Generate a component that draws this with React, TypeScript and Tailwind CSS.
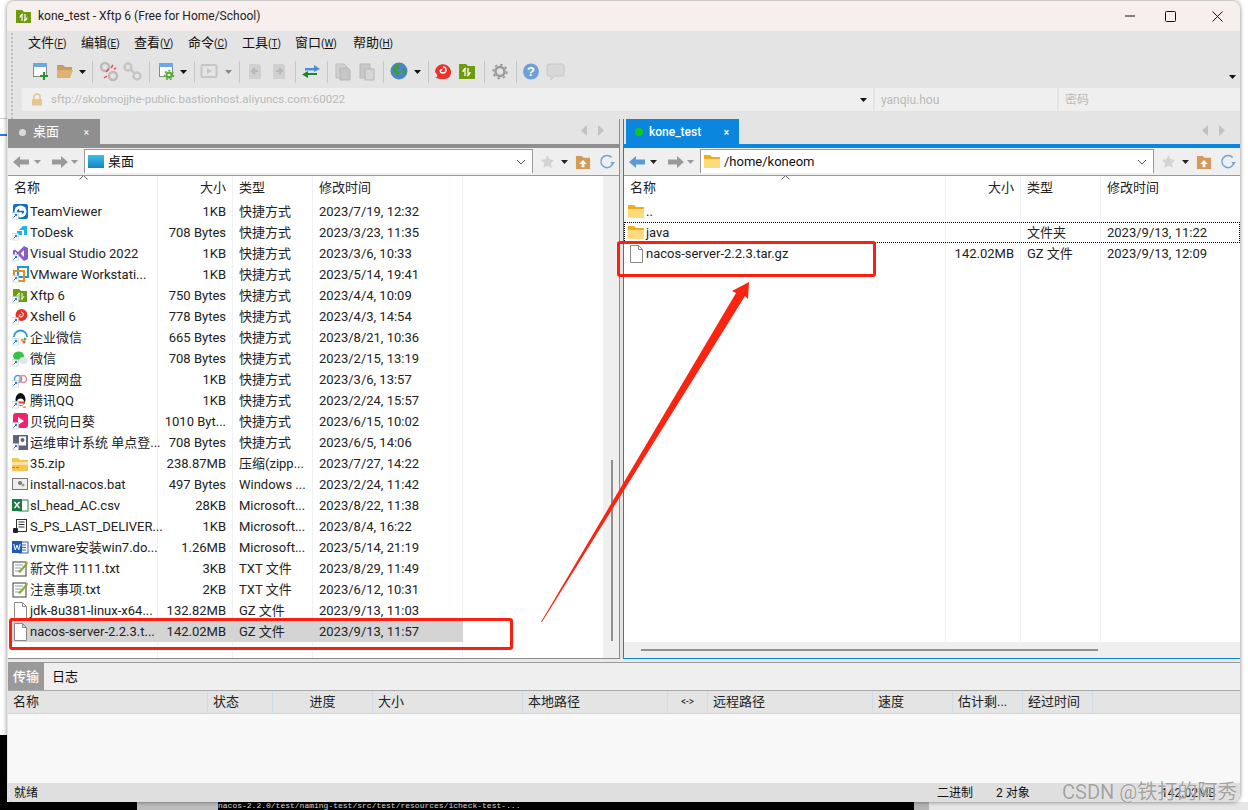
import React from 'react';

type Row = { name: string; size: string; type: string; time: string; icon: string };

const S = '快捷方式';
const leftRows: Row[] = [
    { name: 'TeamViewer', size: '1KB', type: S, time: '2023/7/19, 12:32', icon: 'teamviewer' },
    { name: 'ToDesk', size: '708 Bytes', type: S, time: '2023/3/23, 11:35', icon: 'todesk' },
    { name: 'Visual Studio 2022', size: '1KB', type: S, time: '2023/3/6, 10:33', icon: 'vs' },
    { name: 'VMware Workstati...', size: '1KB', type: S, time: '2023/5/14, 19:41', icon: 'vmware' },
    { name: 'Xftp 6', size: '750 Bytes', type: S, time: '2023/4/4, 10:09', icon: 'xftp' },
    { name: 'Xshell 6', size: '778 Bytes', type: S, time: '2023/4/3, 14:54', icon: 'xshell' },
    { name: '企业微信', size: '665 Bytes', type: S, time: '2023/8/21, 10:36', icon: 'wecom' },
    { name: '微信', size: '708 Bytes', type: S, time: '2023/2/15, 13:19', icon: 'wechat' },
    { name: '百度网盘', size: '1KB', type: S, time: '2023/3/6, 13:57', icon: 'baidu' },
    { name: '腾讯QQ', size: '1KB', type: S, time: '2023/2/24, 15:57', icon: 'qq' },
    { name: '贝锐向日葵', size: '1010 Byt...', type: S, time: '2023/6/15, 10:02', icon: 'sunflower' },
    { name: '运维审计系统 单点登...', size: '708 Bytes', type: S, time: '2023/6/5, 14:06', icon: 'audit' },
    { name: '35.zip', size: '238.87MB', type: '压缩(zipp...', time: '2023/7/27, 14:22', icon: 'zip' },
    { name: 'install-nacos.bat', size: '497 Bytes', type: 'Windows ...', time: '2023/2/24, 11:42', icon: 'bat' },
    { name: 'sl_head_AC.csv', size: '28KB', type: 'Microsoft...', time: '2023/8/22, 11:38', icon: 'excel' },
    { name: 'S_PS_LAST_DELIVER...', size: '1KB', type: 'Microsoft...', time: '2023/8/4, 16:22', icon: 'sql' },
    { name: 'vmware安装win7.do...', size: '1.26MB', type: 'Microsoft...', time: '2023/5/14, 21:19', icon: 'word' },
    { name: '新文件 1111.txt', size: '3KB', type: 'TXT 文件', time: '2023/8/29, 11:49', icon: 'txt' },
    { name: '注意事项.txt', size: '2KB', type: 'TXT 文件', time: '2023/6/12, 10:31', icon: 'txt' },
    { name: 'jdk-8u381-linux-x64...', size: '132.82MB', type: 'GZ 文件', time: '2023/9/13, 11:03', icon: 'file' },
    { name: 'nacos-server-2.2.3.t...', size: '142.02MB', type: 'GZ 文件', time: '2023/9/13, 11:57', icon: 'file' },
];

const rightRows: Row[] = [
    { name: '..', size: '', type: '', time: '', icon: 'folder' },
    { name: 'java', size: '', type: '文件夹', time: '2023/9/13, 11:22', icon: 'folder' },
    { name: 'nacos-server-2.2.3.tar.gz', size: '142.02MB', type: 'GZ 文件', time: '2023/9/13, 12:09', icon: 'file' },
];

const menus = [
    ['文件', 'F', 'w-[53px]'],
    ['编辑', 'E', 'w-[53px]'],
    ['查看', 'V', 'w-[54px]'],
    ['命令', 'C', 'w-[54px]'],
    ['工具', 'T', 'w-[53px]'],
    ['窗口', 'W', 'w-[58px]'],
    ['帮助', 'H', 'w-[53px]'],
];

const transferCols = [
    ['名称', 'w-[200px] pl-[5px]'],
    ['状态', 'w-[65px] pl-[5px]'],
    ['进度', 'w-[100px] text-center'],
    ['大小', 'w-[150px] pl-[5px]'],
    ['本地路径', 'w-[145px] pl-[5px]'],
    ['<->', 'w-[40px] text-center text-[10px]'],
    ['远程路径', 'w-[165px] pl-[5px]'],
    ['速度', 'w-[80px] pl-[5px]'],
    ['估计剩...', 'w-[70px] pl-[5px]'],
    ['经过时间', 'w-[70px] pl-[5px]'],
];

const ShortcutMark = () => (
    <g>
        <rect x="0" y="9.5" width="6.5" height="6.5" fill="#fff" stroke="#bbb" strokeWidth="0.5" />
        <path d="M1.5 14.5 L4.5 11.5 M2.8 11.3 H4.7 V13.2" stroke="#1a6fc4" strokeWidth="1" fill="none" />
    </g>
);

const FileIcon = ({ icon }: { icon: string }) => {
    const body: Record<string, React.ReactNode> = {
        teamviewer: (
            <>
                <rect x="1" y="1" width="15" height="15" rx="2" fill="#0e71c8" />
                <circle cx="8.5" cy="8.5" r="6" fill="#fff" />
                <path d="M5 8.5h7M5 8.5l2-2M12 8.5l-2 2" stroke="#0e71c8" strokeWidth="1.4" fill="none" />
            </>
        ),
        todesk: <path d="M7 6l4-4h4v9h-3V6zM5 7h5v4H5z" fill="#16b6e8" />,
        vs: <path d="M12 1l4 2v11l-4 2-6-6-3 2.500-2-1V5.500l2-1 3 2.500zM12 5l-3.500 3.500L12 12zM3 6.500v4l2-2z" fill="#8a5cc7" />,
        vmware: (
            <>
                <rect x="6" y="1" width="10" height="10" fill="none" stroke="#1c9bd8" strokeWidth="2" />
                <rect x="2" y="5" width="10" height="10" fill="none" stroke="#f08a1c" strokeWidth="2" />
            </>
        ),
        xftp: (
            <>
                <path d="M1 2h6l2 2h6v11H1z" fill="#6d9a12" />
                <path d="M7 6v7M10 6v7M5 9c0-2 3-3 3-3M12 9c0 2-3 3-3 3" stroke="#fff" strokeWidth="1" fill="none" />
            </>
        ),
        xshell: (
            <>
                <circle cx="9.500" cy="7" r="6" fill="#e2352e" />
                <path d="M9 4c3 0 3 5 0 5s-2-3 0-2" stroke="#fff" strokeWidth="1" fill="none" />
            </>
        ),
        wecom: (
            <>
                <path d="M2 8a6.500 6.500 0 0 1 13 0" stroke="#2f9be6" strokeWidth="2" fill="none" />
                <circle cx="10" cy="11" r="1.500" fill="#f2a33a" />
                <circle cx="13" cy="10" r="1.500" fill="#48b06b" />
                <circle cx="12" cy="13" r="1.500" fill="#e6553f" />
            </>
        ),
        wechat: (
            <>
                <ellipse cx="6.500" cy="6" rx="5.500" ry="4.500" fill="#38c14b" />
                <ellipse cx="11.500" cy="10.500" rx="4.500" ry="3.500" fill="#e4e4e4" />
            </>
        ),
        baidu: (
            <>
                <circle cx="6" cy="8" r="3.500" fill="none" stroke="#3aa0e8" strokeWidth="1.600" />
                <circle cx="11" cy="8" r="3.500" fill="none" stroke="#e88aa8" strokeWidth="1.600" />
            </>
        ),
        qq: (
            <>
                <ellipse cx="8.500" cy="7.500" rx="5" ry="6.500" fill="#111" />
                <ellipse cx="8.500" cy="10" rx="3.500" ry="3.500" fill="#fff" />
                <path d="M4 9.500h9v2H4z" fill="#e23a2e" />
                <path d="M3 14.500h4l-1.500 1.500H3zM10 14.500h4v1.500h-2.500z" fill="#f0a020" />
            </>
        ),
        sunflower: (
            <>
                <rect x="1" y="0" width="15" height="15" rx="3" fill="#f0246e" />
                <path d="M6 4l6 4-6 4z" fill="#fff" />
            </>
        ),
        audit: (
            <>
                <rect x="1" y="1" width="15" height="15" fill="#5d6672" />
                <rect x="7" y="2.500" width="7" height="9" fill="#fff" />
                <circle cx="10.500" cy="6" r="2" fill="#5d6672" />
            </>
        ),
        zip: (
            <>
                <path d="M0 3h6l2 2h8v11H0z" fill="#f6c453" />
                <path d="M0 7h16v3H0z" fill="#fbe59a" />
                <path d="M0 12h3v1H0zM4 12h3v1H4z" fill="#9a8a60" />
            </>
        ),
        bat: (
            <>
                <rect x="0.500" y="2.500" width="15" height="11" fill="#eee" stroke="#777" />
                <circle cx="8" cy="7" r="2" fill="#777" />
                <circle cx="11" cy="9" r="1.500" fill="#999" />
            </>
        ),
        excel: (
            <>
                <rect x="7" y="3" width="9" height="11" fill="#fff" stroke="#1f8a4c" />
                <rect x="0" y="2" width="10" height="12" fill="#1d7a43" />
                <path d="M2.500 5l5 6M7.500 5l-5 6" stroke="#fff" strokeWidth="1.300" />
            </>
        ),
        sql: (
            <>
                <rect x="4.500" y="1.500" width="10" height="12" fill="#fff" stroke="#333" />
                <path d="M6.500 4h6M6.500 6.500h6M6.500 9h6" stroke="#333" />
                <rect x="1" y="10" width="5" height="5" rx="1" fill="#222" />
            </>
        ),
        word: (
            <>
                <rect x="7" y="3" width="9" height="11" fill="#fff" stroke="#2b63b8" />
                <path d="M9 6h5M9 8.500h5M9 11h5" stroke="#2b63b8" />
                <rect x="0" y="2" width="10" height="12" fill="#1f5bb5" />
                <path d="M1.800 5l1.500 6 1.700-5 1.700 5 1.500-6" stroke="#fff" strokeWidth="1" fill="none" />
            </>
        ),
        txt: (
            <>
                <rect x="1" y="2" width="13" height="14" fill="#fff" stroke="#3d3d3d" />
                <path d="M3 5h8M3 8h6M3 11h6" stroke="#8a9aa5" />
                <path d="M6 12L14 3l1.500 1.500L8 13z" fill="#7fae2c" />
                <path d="M13 2h3v2z" fill="#e2a72e" />
            </>
        ),
        file: <path d="M2.500 0.500h8l4 4v13h-12zM10.500 0.500v4h4" fill="#fff" stroke="#8a8a8a" />,
        folder: (
            <>
                <path d="M0 2h6l2 2h8v11H0z" fill="#f0ac1a" />
                <path d="M0 6h16v9H0z" fill="#fddb7c" />
            </>
        ),
    };
    const isShortcut = !['zip', 'bat', 'excel', 'sql', 'word', 'txt', 'file', 'folder'].includes(icon);

    return (
        <svg width="17" height="18" viewBox="0 0 17 18" className="shrink-0">
            {body[icon]}
            {isShortcut && <ShortcutMark />}
        </svg>
    );
};

const Caret = ({ className }: { className: string }) => (
    <svg width="7" height="4" viewBox="0 0 7 4" className={`shrink-0 ${className}`}>
        <path d="M0 0h7L3.500 4z" fill="currentColor" />
    </svg>
);

const ToolIcon = ({ name }: { name: string }) => {
    const icons: Record<string, React.ReactNode> = {
        add: (
            <>
                <rect x="4.500" y="2.500" width="13" height="13" fill="#fff" stroke="#888" />
                <rect x="4" y="2" width="14" height="4" fill="#6aa8e4" />
                <path d="M15 11v8M11 15h8" stroke="#1d9a2a" strokeWidth="2" />
            </>
        ),
        open: (
            <>
                <path d="M4 4h6l2 2h7v4H4z" fill="#c89d5f" />
                <path d="M4 17V9h16l-3 8z" fill="#e0b172" />
            </>
        ),
        unlink: (
            <>
                <circle cx="8" cy="6" r="4" fill="none" stroke="#bbb" strokeWidth="2.500" />
                <circle cx="16" cy="15" r="4" fill="none" stroke="#bbb" strokeWidth="2.500" />
                <path d="M12 8l-3 3M14 7l2-3M10 15l-3 2M17 8l2-1" stroke="#ef4a4a" strokeWidth="1.500" />
            </>
        ),
        link: (
            <>
                <circle cx="7" cy="6" r="3.500" fill="none" stroke="#c6c6c6" strokeWidth="2.500" />
                <circle cx="16" cy="15" r="3.500" fill="none" stroke="#c6c6c6" strokeWidth="2.500" />
                <path d="M9 8l5 5" stroke="#c6c6c6" strokeWidth="2.500" />
            </>
        ),
        settings: (
            <>
                <rect x="4.500" y="2.500" width="13" height="13" fill="#fff" stroke="#888" />
                <rect x="4" y="2" width="14" height="4" fill="#6aa8e4" />
                <circle cx="14" cy="14" r="2.500" fill="none" stroke="#4fae2e" strokeWidth="2" />
                <circle cx="14" cy="14" r="4.500" fill="none" stroke="#4fae2e" strokeWidth="1.500" strokeDasharray="2 2" />
            </>
        ),
        play: (
            <>
                <rect x="2.500" y="4" width="15" height="12" rx="1" fill="none" stroke="#c6c6c6" strokeWidth="2" />
                <path d="M8 7l5 3-5 3z" fill="#c6c6c6" />
            </>
        ),
        pageLeft: (
            <>
                <path d="M5 3h10l2 2v13H5z" fill="#d0d0d0" />
                <path d="M14 10H9M11 7l-3 3 3 3" stroke="#b8b8b8" strokeWidth="2" fill="none" />
            </>
        ),
        pageRight: (
            <>
                <path d="M5 3h10l2 2v13H5z" fill="#d0d0d0" />
                <path d="M8 10h5M11 7l3 3-3 3" stroke="#b8b8b8" strokeWidth="2" fill="none" />
            </>
        ),
        swap: (
            <>
                <path d="M6 7h9V4l6 4-6 3V9.500H6z" fill="#4a8fd6" />
                <path d="M18 12H9V10L3 13.500 9 17v-3h9z" fill="#1d8a2a" />
            </>
        ),
        copy: (
            <>
                <path d="M5 3h8l3 3v11H5z" fill="#d0d0d0" stroke="#bdbdbd" />
                <path d="M9 7h8l2 2v10H9z" fill="#c6c6c6" stroke="#b5b5b5" />
            </>
        ),
        paste: (
            <>
                <rect x="5" y="3" width="10" height="14" fill="#c9c9c9" stroke="#b5b5b5" />
                <rect x="10" y="8" width="9" height="11" fill="#d6d6d6" stroke="#b5b5b5" />
            </>
        ),
        globe: (
            <>
                <circle cx="11" cy="10" r="8.500" fill="#4a86c8" />
                <path d="M6 4l5-1 1 3-3 3 2 2-1 5-3-3-2-4zM15 7l3 1 0 4-2 2-2-3z" fill="#3f9a46" />
            </>
        ),
        xshell: (
            <>
                <path d="M3 11a8 8 0 1 1 14 5.500c-3 2-9 2-14 0 3-.5 3-2 0-5.500z" fill="#e8332a" />
                <path d="M11 6c4 0 4 6 0 6s-3-4-.5-3.500" stroke="#fff" strokeWidth="1.400" fill="none" />
            </>
        ),
        xftp: (
            <>
                <path d="M3 3h7l2 2h7v13H3z" fill="#6f9c0d" />
                <path d="M9 7v8M12 7v8M7 11c0-2.500 3-4 3-4M14 11c0 2.500-3 4-3 4" stroke="#fff" strokeWidth="1.300" fill="none" />
            </>
        ),
        gear: (
            <>
                <circle cx="12" cy="10.500" r="4.500" fill="none" stroke="#9a9a9a" strokeWidth="2.600" />
                <circle cx="12" cy="10.500" r="6.800" fill="none" stroke="#9a9a9a" strokeWidth="1.800" strokeDasharray="2.600 2.700" />
            </>
        ),
        help: (
            <>
                <circle cx="11" cy="10.500" r="8" fill="#6e9fd6" />
                <text x="11" y="15" textAnchor="middle" fontSize="13" fontWeight="700" fill="#fff" fontFamily="Liberation Sans, sans-serif">?</text>
            </>
        ),
        chat: <path d="M5 3h13a2 2 0 0 1 2 2v8a2 2 0 0 1-2 2h-8l-3 4v-4H5a2 2 0 0 1-2-2V5a2 2 0 0 1 2-2z" fill="#d8d8d8" stroke="#c6c6c6" />,
    };

    return (
        <svg width="24" height="22" viewBox="0 0 24 22" className="shrink-0">
            {icons[name]}
        </svg>
    );
};

const Sep = ({ className }: { className: string }) => <div className={`w-px h-[22px] bg-[#c8c8c8] shrink-0 ${className}`} />;

const NavArrow = ({ dir, color }: { dir: 'left' | 'right'; color: string }) => (
    <svg width="18" height="16" viewBox="0 0 18 16" className="shrink-0">
        <path d={dir === 'left' ? 'M1 8l7-6v3.500h9v5H8V14z' : 'M17 8l-7-6v3.500H1v5h9V14z'} fill={color} />
    </svg>
);

const PathBar = ({ local }: { local: boolean }) => (
    <div className="h-[28px] shrink-0 flex items-center bg-[#efefef] border-b border-[#9a9a9a]">
        <div className="flex items-center shrink-0 w-[76px] pl-[4px]">
            <NavArrow dir="left" color={local ? '#9a9a9a' : '#5b9bd5'} />
            <Caret className={`ml-[4px] ${local ? 'text-[#9a9a9a]' : 'text-[#222]'}`} />
            <div className="ml-[10px]">
                <NavArrow dir="right" color="#9a9a9a" />
            </div>
            <Caret className="ml-[2px] text-[#9a9a9a]" />
        </div>
        <div className="flex-1 h-[24px] self-start mt-px bg-white border border-b-0 border-[#9a9a9a] flex items-center pl-[2px] pr-[6px] text-[13px] text-[#111]">
            {local ? (
                <svg width="18" height="15" viewBox="0 0 18 15" className="shrink-0">
                    <defs>
                        <linearGradient id="desk" x1="0" y1="0" x2="0" y2="1">
                            <stop offset="0" stopColor="#35c4ea" />
                            <stop offset="1" stopColor="#1c7fc4" />
                        </linearGradient>
                    </defs>
                    <rect x="1" y="1" width="16" height="13" fill="url(#desk)" />
                </svg>
            ) : (
                <svg width="18" height="15" viewBox="0 0 18 15" className="shrink-0">
                    <path d="M1 1h6l2 2h8v11H1z" fill="#f0ac1a" />
                    <path d="M1 5h16v9H1z" fill="#fddb7c" />
                </svg>
            )}
            <span className="ml-[3px] flex-1">{local ? '桌面' : '/home/koneom'}</span>
            <svg width="10" height="6" viewBox="0 0 10 6"><path d="M1 1l4 4 4-4" stroke="#555" fill="none" /></svg>
        </div>
        <div className="w-[86px] shrink-0 flex items-center pl-[7px]">
            <svg width="15" height="15" viewBox="0 0 16 16" className="shrink-0">
                <path d="M8 1l2.200 4.600 5 .7-3.600 3.500.9 5L8 12.400 3.500 14.800l.9-5L.8 6.300l5-.7z" fill="#d4d4d4" />
            </svg>
            <Caret className="ml-[6px] text-[#222]" />
            <svg width="16" height="16" viewBox="0 0 17 17" className="ml-[7px] shrink-0">
                <path d="M1 2h6l2 2h7v12H1z" fill="#d49a5a" />
                <path d="M8.500 6.500l4 4h-2.500V14H7v-3.500H4.500z" fill="#fff" />
            </svg>
            <svg width="16" height="16" viewBox="0 0 17 17" className="ml-[8px] shrink-0">
                <path d="M13.500 3.800A6.500 6.500 0 1 0 15 8.500" stroke="#6aa5dc" strokeWidth="1.600" fill="none" />
                <path d="M12 8.500h5l-2.500 3z" fill="#6aa5dc" />
            </svg>
        </div>
    </div>
);

const FileTable = ({ rows, nameCol, remote }: { rows: Row[]; nameCol: string; remote?: boolean }) => (
    <div className="flex-1 min-h-0 min-w-0 bg-white text-[13px] text-[#222] overflow-hidden relative">
        <div className="absolute top-0 bottom-0 left-0 flex">
            <div className={`${nameCol} border-r border-[#edf2f8] shrink-0`} />
            <div className="w-[75px] border-r border-[#edf2f8] shrink-0" />
            <div className="w-[80px] border-r border-[#edf2f8] shrink-0" />
            <div className="w-[150px] border-r border-[#edf2f8] shrink-0" />
        </div>
        <div className="flex h-[25px] pb-px items-center relative">
            <div className={`${nameCol} flex items-center pl-[6px] shrink-0`}>名称</div>
            <div className="w-[75px] flex items-center justify-end pr-[7px] shrink-0">大小</div>
            <div className="w-[80px] flex items-center pl-[6px] shrink-0">类型</div>
            <div className="w-[150px] flex items-center pl-[6px] shrink-0">修改时间</div>
            <div className={`absolute top-[-1px] ${remote ? 'left-[157px]' : 'left-[71px]'}`}>
                <svg width="9" height="5" viewBox="0 0 9 5" className="block"><path d="M0.500 4.500l4-4 4 4" stroke="#666" fill="none" /></svg>
            </div>
        </div>
        <div className="relative">
            {rows.map((row) => {
                const selected = row.name.endsWith('.t...');
                const focused = remote && row.name === 'java';
                return (
                    <div
                        key={row.name}
                        className={`flex h-[21px] items-center whitespace-nowrap ${selected ? 'bg-[#d4d4d4] w-[453px] ml-[2px]' : ''} ${focused ? 'outline-1 outline-dotted outline-black -outline-offset-1' : ''}`}
                    >
                        <div className={`${nameCol} flex items-center shrink-0 ${selected ? 'pl-[2px] -mr-[2px]' : 'pl-[4px]'}`}>
                            <FileIcon icon={row.icon} />
                            <span className="ml-px">{row.name}</span>
                        </div>
                        <div className="w-[75px] text-right pr-[7px] shrink-0">{row.size}</div>
                        <div className="w-[80px] pl-[6px] shrink-0">{row.type}</div>
                        <div className="w-[150px] pl-[6px] shrink-0">{row.time}</div>
                    </div>
                );
            })}
        </div>
    </div>
);

const TabArrows = () => (
    <div className="flex gap-[11px] items-center pb-[2px] text-[#c2c2c2]">
        <svg width="6" height="11" viewBox="0 0 6 11"><path d="M6 0v11L0 5.500z" fill="currentColor" /></svg>
        <svg width="6" height="11" viewBox="0 0 6 11"><path d="M0 0v11l6-5.500z" fill="currentColor" /></svg>
    </div>
);

const App = () => {
    return (
        <div className="relative w-[1248px] h-[810px] overflow-hidden bg-white" style={{ fontFamily: 'Roboto, "Noto Sans CJK SC", sans-serif' }}>
            {/* desktop behind the window */}
            <div className="absolute left-0 top-[735px] w-[7px] h-[75px] bg-black" />
            <div className="absolute left-0 top-[802px] w-[1248px] h-[8px] flex">
                <div className="w-[137px] bg-black" />
                <div className="w-[81px] bg-[#bdbdbd]" />
                <div className="w-[696px] bg-black text-[8px] leading-[8px] text-[#ddd] whitespace-nowrap overflow-hidden" style={{ fontFamily: '"Liberation Mono", monospace' }}>
                    nacos-2.2.0/test/naming-test/src/test/resources/1check-test-...
                </div>
                <div className="w-[15px] bg-[#b5b5b5]" />
                <div className="flex-1 bg-[#e6e6e6]" />
            </div>
            <div className="absolute left-0 top-[118px] w-[7px] h-px bg-[#ccc]" />
            <div className="absolute left-0 top-[134px] w-[7px] h-[2px] bg-[#2a7fd4]" />

            {/* app window */}
            <div className="absolute left-[7px] top-px w-[1233px] h-[801px] flex flex-col rounded-[8px] overflow-hidden bg-[#e4e4e4] shadow-[0_0_4px_rgba(0,0,0,0.5)]">
                <div className="h-[30px] shrink-0 bg-[#f7efee] flex items-center text-[12px] text-[#222]">
                    <svg width="17" height="15" viewBox="0 0 17 15" className="ml-[8px] shrink-0">
                        <path d="M1 1h6l2 2h7v11H1z" fill="#6f9c0d" />
                        <path d="M7 5v7M10 5v7M5 8.500C5 6.500 8 5 8 5M12 8.500c0 2-3 3.500-3 3.500" stroke="#fff" strokeWidth="1.200" fill="none" />
                    </svg>
                    <span className="ml-[6px] flex-1">kone_test - Xftp 6 (Free for Home/School)</span>
                    <svg width="10" height="2" viewBox="0 0 10 2" className="mr-[30px]"><path d="M0 1h10" stroke="#111" /></svg>
                    <svg width="11" height="11" viewBox="0 0 11 11" className="mr-[36px]"><rect x="0.500" y="0.500" width="10" height="10" rx="1" fill="none" stroke="#111" /></svg>
                    <svg width="11" height="11" viewBox="0 0 11 11" className="mr-[17px]"><path d="M0.500 0.500l10 10M10.500 0.500l-10 10" stroke="#111" /></svg>
                </div>

                <div className="relative h-[88px] shrink-0 bg-[#e4e4e4]">
                    <div className="absolute left-[4px] top-[2px] h-[86px] border-l-2 border-dotted border-[#bdbdbd]" />
                    <div className="h-[24px] flex items-center pl-[21px] text-[13px] text-[#111]">
                        {menus.map(([label, key, width]) => (
                            <div key={key} className={`${width} shrink-0`}>
                                {label}
                                <span className="text-[10px]">(<span className="underline">{key}</span>)</span>
                            </div>
                        ))}
                    </div>
                    <div className="h-[32px] pt-[2px] flex items-center pl-[22px]">
                        <ToolIcon name="add" />
                        <ToolIcon name="open" />
                        <Caret className="mx-[1.5px] text-[#111]" />
                        <Sep className="ml-[5px] mr-[4px]" />
                        <ToolIcon name="unlink" />
                        <ToolIcon name="link" />
                        <Sep className="ml-[4px] mr-[5px]" />
                        <ToolIcon name="settings" />
                        <Caret className="mx-[.5px] text-[#111]" />
                        <Sep className="ml-[7px] mr-[4px]" />
                        <ToolIcon name="play" />
                        <Caret className="mx-[1.5px] text-[#888]" />
                        <Sep className="ml-[6px] mr-[4px]" />
                        <ToolIcon name="pageLeft" />
                        <ToolIcon name="pageRight" />
                        <Sep className="ml-[3px] mr-[3px]" />
                        <ToolIcon name="swap" />
                        <Sep className="ml-[4px] mr-[3px]" />
                        <ToolIcon name="copy" />
                        <ToolIcon name="paste" />
                        <Sep className="ml-[4px] mr-[4px]" />
                        <ToolIcon name="globe" />
                        <Caret className="mx-[1.5px] text-[#111]" />
                        <Sep className="ml-[6px] mr-[3px]" />
                        <ToolIcon name="xshell" />
                        <ToolIcon name="xftp" />
                        <Sep className="ml-[4px] mr-[3px]" />
                        <ToolIcon name="gear" />
                        <Sep className="ml-[4px] mr-[3px]" />
                        <ToolIcon name="help" />
                        <ToolIcon name="chat" />
                        <Caret className="ml-auto mr-[4px] mt-[10px] text-[#111]" />
                    </div>
                    <div className="h-[23px] mt-[1px] flex pl-[15px] gap-[2px] text-[12px] text-[#b9b9b9]">
                        <div className="w-[851px] bg-[#efefef] flex items-center pl-[9px] pr-[6px] text-[11.5px]">
                            <svg width="12" height="13" viewBox="0 0 12 13" className="shrink-0">
                                <path d="M3 6V4a3 3 0 0 1 6 0v2" stroke="#e8c48e" strokeWidth="1.500" fill="none" />
                                <rect x="1" y="6" width="10" height="6.500" rx="1" fill="#e8c48e" />
                            </svg>
                            <span className="ml-[8px] flex-1">sftp://skobmojjhe-public.bastionhost.aliyuncs.com:60022</span>
                            <Caret className="text-[#111]" />
                        </div>
                        <div className="w-[182px] bg-[#efefef] flex items-center pl-[6px]">yanqiu.hou</div>
                        <div className="flex-1 bg-[#efefef] flex items-center pl-[6px]">密码</div>
                    </div>
                </div>

                <div className="h-[540px] shrink-0 flex">
                    <div className="w-[612px] ml-px flex flex-col shrink-0 border-r border-b border-[#8c8c8c]">
                        <div className="h-[25px] shrink-0 flex justify-between items-end pr-[15px]">
                            <div className="w-[92px] h-full bg-[#8f8f8f] flex items-center pl-[11px] pt-px text-[13px] text-white">
                                <span className="w-[7px] h-[7px] rounded-full bg-[#d9d9d9]" />
                                <span className="ml-[7px] flex-1">桌面</span>
                                <span className="mr-[11px] text-[10px]">×</span>
                            </div>
                            <div className="h-full flex items-center"><TabArrows /></div>
                        </div>
                        <div className="h-[4px] shrink-0 bg-[#8f8f8f]" />
                        <PathBar local />
                        <div className="flex-1 min-h-0 flex">
                            <FileTable rows={leftRows} nameCol="w-[150px]" />
                            <div className="w-[16px] shrink-0 bg-[#efefef] relative">
                                <div className="absolute left-[8px] top-[284px] w-[2px] h-[181px] bg-[#8f8f8f]" />
                            </div>
                        </div>
                    </div>
                    <div className="w-[3px] shrink-0" />
                    <div className="flex-1 min-w-0 flex flex-col border-l border-b border-[#0a86de]">
                        <div className="h-[25px] shrink-0 flex justify-between items-end pl-[2px] pr-[15px]">
                            <div className="w-[113px] h-full bg-[#0a86de] flex items-center pl-[9px] pt-px text-[12px] font-medium text-white">
                                <span className="w-[8px] h-[8px] rounded-full bg-[#12c71a]" />
                                <span className="ml-[6px] flex-1">kone_test</span>
                                <span className="mr-[10px] text-[10px]">×</span>
                            </div>
                            <div className="h-full flex items-center"><TabArrows /></div>
                        </div>
                        <div className="h-[4px] shrink-0 bg-[#0a86de]" />
                        <PathBar local={false} />
                        <FileTable rows={rightRows} nameCol="w-[322px]" remote />
                        <div className="h-[16px] shrink-0 bg-[#efefef] flex items-center pl-[17px]">
                            <div className="w-[457px] h-[2px] bg-[#8f8f8f]" />
                        </div>
                    </div>
                </div>

                <div className="h-[4px] shrink-0 border-b border-[#9a9a9a] bg-[#e9e9e9] ml-px" />
                <div className="h-[27px] shrink-0 bg-[#efefef] flex text-[13px] text-[#111] ml-px">
                    <div className="w-[36px] bg-[#9a9a9a] text-white flex items-center justify-center font-medium">传输</div>
                    <div className="ml-[8px] flex items-center">日志</div>
                </div>
                <div className="h-[24px] shrink-0 flex bg-[#e4e4e4] border-y border-y-[#c9d6e4] border-t-[#a9a9a9] text-[13px] text-[#222] ml-px">
                    {transferCols.map(([label, cls]) => (
                        <div key={label} className={`${cls} shrink-0 border-r border-[#cfdcec] leading-[22px]`}>{label}</div>
                    ))}
                </div>
                <div className="flex-1 bg-[#f8f8f8] ml-px" />
                <div className="h-[19px] shrink-0 bg-[#dfdfdf] flex items-center pt-px text-[12px] text-[#111] pl-[7px] pr-[3px]">
                    <span className="flex-1">就绪</span>
                    <span className="w-[59px]">二进制</span>
                    <span className="w-[165px]">2 对象</span>
                    <span className="w-[76px]">142.02MB</span>
                </div>
            </div>

            {/* red annotations drawn on top of the screenshot */}
            <div className="absolute left-[9px] top-[618px] w-[504px] h-[32px] border-[3px] border-[#fb1f10] rounded-[3px]" />
            <div className="absolute left-[617px] top-[241px] w-[259px] h-[36px] border-[3px] border-[#fb1f10] rounded-[3px]" />
            <svg className="absolute left-0 top-0 pointer-events-none" width="1248" height="810" viewBox="0 0 1248 810">
                <path d="M541 622L736 293 732 291 749 282 748 299 745 296 542 622z" fill="#fb2410" />
            </svg>
            <div className="absolute left-[1062px] top-[778px] text-[20px] leading-[28px] text-[rgba(110,110,110,0.65)] whitespace-nowrap [text-shadow:0_0_1px_#fff]">CSDN @铁打的阿秀</div>
        </div>
    );
};

export default App;
